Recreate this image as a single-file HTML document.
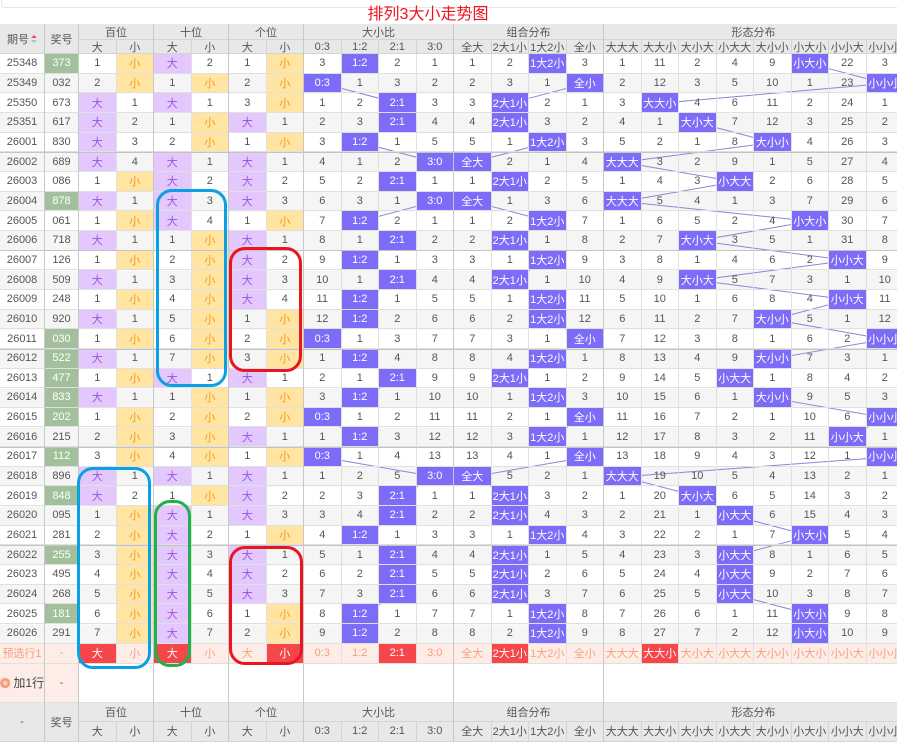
<!DOCTYPE html>
<html><head><meta charset="utf-8">
<style>
html,body{margin:0;padding:0;width:897px;height:742px;overflow:hidden;background:#fff}
body{position:relative;font-family:"Liberation Sans","Noto Sans CJK SC",sans-serif;}
.topbox{position:absolute;left:1px;top:-6px;width:905px;height:12px;border:1px solid #e6e6e6;border-radius:4px}
.title{position:absolute;left:0;width:856px;top:5px;text-align:center;color:#f0141e;font-size:16px;line-height:20px}
.stripes{position:absolute;left:0;top:54px;width:910px;height:590px;background:repeating-linear-gradient(to bottom,#fff 0,#fff 19.667px,#f5f5f5 19.667px,#f5f5f5 39.333px)}
svg.lines{position:absolute;left:0;top:0}
.grid{position:absolute;left:0;top:24px;display:grid;grid-template-columns:45px 34px repeat(22,37.5px);grid-template-rows:16px 14px repeat(30,19.667px) 20px 39px 19px 20px;font-size:11px;color:#555}
.grid i{font-style:normal;box-sizing:border-box;border-right:1px solid #e0e0e0;border-bottom:1px solid #e0e0e0;display:flex;align-items:center;justify-content:center;white-space:nowrap;overflow:hidden}
.grid i.hd{background:#e8e8e8;border-color:#d4d4d4;color:#555}
.r2{grid-row:span 2}.c2{grid-column:span 2}.c4{grid-column:span 4}.c8{grid-column:span 8}.c22{grid-column:span 22}
.grid i.b{background:#e3c8fd;color:#9a55dc}
.grid i.s{background:#ffe4a2;color:#f39a1a}
.grid i.h{background:#7c6cf8;color:#fff}
.grid i.g{background:#a3c09c;color:#fff}
.grid i.p{background:#feede6;color:#f3a07f}
.grid i.r{background:#f5474a;color:#fff}
.grid i.w{background:#fff}
.hl{position:absolute;left:0;width:910px;height:1px;background:#c4c4c4}
.vl{position:absolute;top:24px;width:1px;height:718px;background:#c8c8c8}
.box{position:absolute;border:3.5px solid;border-radius:16px;box-sizing:border-box}
.arr{display:inline-block;width:6px;margin-left:2px;vertical-align:middle}
</style></head><body>
<div class="topbox"></div>
<div class="title">排列3大小走势图</div>
<div class="stripes"></div>
<svg class="lines" width="897" height="742">
<g fill="none" stroke="#8a86d8" stroke-width="1">
<polyline points="360.3,63.8 322.8,83.5 397.8,103.2 397.8,122.8 360.3,142.5 435.3,162.2 397.8,181.8 435.3,201.5 360.3,221.2 397.8,240.8 360.3,260.5 397.8,280.2 360.3,299.8 360.3,319.5 322.8,339.2 360.3,358.8 397.8,378.5 360.3,398.2 322.8,417.8 360.3,437.5 322.8,457.2 435.3,476.8 397.8,496.5 397.8,516.2 360.3,535.8 397.8,555.5 397.8,575.2 397.8,594.8 360.3,614.5 360.3,634.2"/>
<polyline points="547.8,63.8 585.3,83.5 510.3,103.2 510.3,122.8 547.8,142.5 472.8,162.2 510.3,181.8 472.8,201.5 547.8,221.2 510.3,240.8 547.8,260.5 510.3,280.2 547.8,299.8 547.8,319.5 585.3,339.2 547.8,358.8 510.3,378.5 547.8,398.2 585.3,417.8 547.8,437.5 585.3,457.2 472.8,476.8 510.3,496.5 510.3,516.2 547.8,535.8 510.3,555.5 510.3,575.2 510.3,594.8 547.8,614.5 547.8,634.2"/>
<polyline points="810.3,63.8 885.3,83.5 660.3,103.2 697.8,122.8 772.8,142.5 622.8,162.2 735.3,181.8 622.8,201.5 810.3,221.2 697.8,240.8 847.8,260.5 697.8,280.2 847.8,299.8 772.8,319.5 885.3,339.2 772.8,358.8 735.3,378.5 772.8,398.2 885.3,417.8 847.8,437.5 885.3,457.2 622.8,476.8 697.8,496.5 735.3,516.2 810.3,535.8 735.3,555.5 735.3,575.2 735.3,594.8 810.3,614.5 810.3,634.2"/>
</g></svg>
<div class="grid">
<i class="hd r2">期号<svg class="arr" width="6" height="10" viewBox="0 0 6 10"><path d="M0 4L3 1L6 4Z" fill="#f0505a"/><path d="M0 6L3 9L6 6Z" fill="#bbb"/></svg></i><i class="hd r2">奖号</i><i class="hd c2">百位</i><i class="hd c2">十位</i><i class="hd c2">个位</i><i class="hd c4">大小比</i><i class="hd c4">组合分布</i><i class="hd c8">形态分布</i>
<i class="hd">大</i><i class="hd">小</i><i class="hd">大</i><i class="hd">小</i><i class="hd">大</i><i class="hd">小</i><i class="hd">0:3</i><i class="hd">1:2</i><i class="hd">2:1</i><i class="hd">3:0</i><i class="hd">全大</i><i class="hd">2大1小</i><i class="hd">1大2小</i><i class="hd">全小</i><i class="hd">大大大</i><i class="hd">大大小</i><i class="hd">大小大</i><i class="hd">小大大</i><i class="hd">大小小</i><i class="hd">小大小</i><i class="hd">小小大</i><i class="hd">小小小</i>

<i>25348</i><i class="g">373</i><i>1</i><i class="s">小</i><i class="b">大</i><i>2</i><i>1</i><i class="s">小</i><i>3</i><i class="h">1:2</i><i>2</i><i>1</i><i>1</i><i>2</i><i class="h">1大2小</i><i>3</i><i>1</i><i>11</i><i>2</i><i>4</i><i>9</i><i class="h">小大小</i><i>22</i><i>3</i>
<i>25349</i><i>032</i><i>2</i><i class="s">小</i><i>1</i><i class="s">小</i><i>2</i><i class="s">小</i><i class="h">0:3</i><i>1</i><i>3</i><i>2</i><i>2</i><i>3</i><i>1</i><i class="h">全小</i><i>2</i><i>12</i><i>3</i><i>5</i><i>10</i><i>1</i><i>23</i><i class="h">小小小</i>
<i>25350</i><i>673</i><i class="b">大</i><i>1</i><i class="b">大</i><i>1</i><i>3</i><i class="s">小</i><i>1</i><i>2</i><i class="h">2:1</i><i>3</i><i>3</i><i class="h">2大1小</i><i>2</i><i>1</i><i>3</i><i class="h">大大小</i><i>4</i><i>6</i><i>11</i><i>2</i><i>24</i><i>1</i>
<i>25351</i><i>617</i><i class="b">大</i><i>2</i><i>1</i><i class="s">小</i><i class="b">大</i><i>1</i><i>2</i><i>3</i><i class="h">2:1</i><i>4</i><i>4</i><i class="h">2大1小</i><i>3</i><i>2</i><i>4</i><i>1</i><i class="h">大小大</i><i>7</i><i>12</i><i>3</i><i>25</i><i>2</i>
<i>26001</i><i>830</i><i class="b">大</i><i>3</i><i>2</i><i class="s">小</i><i>1</i><i class="s">小</i><i>3</i><i class="h">1:2</i><i>1</i><i>5</i><i>5</i><i>1</i><i class="h">1大2小</i><i>3</i><i>5</i><i>2</i><i>1</i><i>8</i><i class="h">大小小</i><i>4</i><i>26</i><i>3</i>
<i>26002</i><i>689</i><i class="b">大</i><i>4</i><i class="b">大</i><i>1</i><i class="b">大</i><i>1</i><i>4</i><i>1</i><i>2</i><i class="h">3:0</i><i class="h">全大</i><i>2</i><i>1</i><i>4</i><i class="h">大大大</i><i>3</i><i>2</i><i>9</i><i>1</i><i>5</i><i>27</i><i>4</i>
<i>26003</i><i>086</i><i>1</i><i class="s">小</i><i class="b">大</i><i>2</i><i class="b">大</i><i>2</i><i>5</i><i>2</i><i class="h">2:1</i><i>1</i><i>1</i><i class="h">2大1小</i><i>2</i><i>5</i><i>1</i><i>4</i><i>3</i><i class="h">小大大</i><i>2</i><i>6</i><i>28</i><i>5</i>
<i>26004</i><i class="g">878</i><i class="b">大</i><i>1</i><i class="b">大</i><i>3</i><i class="b">大</i><i>3</i><i>6</i><i>3</i><i>1</i><i class="h">3:0</i><i class="h">全大</i><i>1</i><i>3</i><i>6</i><i class="h">大大大</i><i>5</i><i>4</i><i>1</i><i>3</i><i>7</i><i>29</i><i>6</i>
<i>26005</i><i>061</i><i>1</i><i class="s">小</i><i class="b">大</i><i>4</i><i>1</i><i class="s">小</i><i>7</i><i class="h">1:2</i><i>2</i><i>1</i><i>1</i><i>2</i><i class="h">1大2小</i><i>7</i><i>1</i><i>6</i><i>5</i><i>2</i><i>4</i><i class="h">小大小</i><i>30</i><i>7</i>
<i>26006</i><i>718</i><i class="b">大</i><i>1</i><i>1</i><i class="s">小</i><i class="b">大</i><i>1</i><i>8</i><i>1</i><i class="h">2:1</i><i>2</i><i>2</i><i class="h">2大1小</i><i>1</i><i>8</i><i>2</i><i>7</i><i class="h">大小大</i><i>3</i><i>5</i><i>1</i><i>31</i><i>8</i>
<i>26007</i><i>126</i><i>1</i><i class="s">小</i><i>2</i><i class="s">小</i><i class="b">大</i><i>2</i><i>9</i><i class="h">1:2</i><i>1</i><i>3</i><i>3</i><i>1</i><i class="h">1大2小</i><i>9</i><i>3</i><i>8</i><i>1</i><i>4</i><i>6</i><i>2</i><i class="h">小小大</i><i>9</i>
<i>26008</i><i>509</i><i class="b">大</i><i>1</i><i>3</i><i class="s">小</i><i class="b">大</i><i>3</i><i>10</i><i>1</i><i class="h">2:1</i><i>4</i><i>4</i><i class="h">2大1小</i><i>1</i><i>10</i><i>4</i><i>9</i><i class="h">大小大</i><i>5</i><i>7</i><i>3</i><i>1</i><i>10</i>
<i>26009</i><i>248</i><i>1</i><i class="s">小</i><i>4</i><i class="s">小</i><i class="b">大</i><i>4</i><i>11</i><i class="h">1:2</i><i>1</i><i>5</i><i>5</i><i>1</i><i class="h">1大2小</i><i>11</i><i>5</i><i>10</i><i>1</i><i>6</i><i>8</i><i>4</i><i class="h">小小大</i><i>11</i>
<i>26010</i><i>920</i><i class="b">大</i><i>1</i><i>5</i><i class="s">小</i><i>1</i><i class="s">小</i><i>12</i><i class="h">1:2</i><i>2</i><i>6</i><i>6</i><i>2</i><i class="h">1大2小</i><i>12</i><i>6</i><i>11</i><i>2</i><i>7</i><i class="h">大小小</i><i>5</i><i>1</i><i>12</i>
<i>26011</i><i class="g">030</i><i>1</i><i class="s">小</i><i>6</i><i class="s">小</i><i>2</i><i class="s">小</i><i class="h">0:3</i><i>1</i><i>3</i><i>7</i><i>7</i><i>3</i><i>1</i><i class="h">全小</i><i>7</i><i>12</i><i>3</i><i>8</i><i>1</i><i>6</i><i>2</i><i class="h">小小小</i>
<i>26012</i><i class="g">522</i><i class="b">大</i><i>1</i><i>7</i><i class="s">小</i><i>3</i><i class="s">小</i><i>1</i><i class="h">1:2</i><i>4</i><i>8</i><i>8</i><i>4</i><i class="h">1大2小</i><i>1</i><i>8</i><i>13</i><i>4</i><i>9</i><i class="h">大小小</i><i>7</i><i>3</i><i>1</i>
<i>26013</i><i class="g">477</i><i>1</i><i class="s">小</i><i class="b">大</i><i>1</i><i class="b">大</i><i>1</i><i>2</i><i>1</i><i class="h">2:1</i><i>9</i><i>9</i><i class="h">2大1小</i><i>1</i><i>2</i><i>9</i><i>14</i><i>5</i><i class="h">小大大</i><i>1</i><i>8</i><i>4</i><i>2</i>
<i>26014</i><i class="g">833</i><i class="b">大</i><i>1</i><i>1</i><i class="s">小</i><i>1</i><i class="s">小</i><i>3</i><i class="h">1:2</i><i>1</i><i>10</i><i>10</i><i>1</i><i class="h">1大2小</i><i>3</i><i>10</i><i>15</i><i>6</i><i>1</i><i class="h">大小小</i><i>9</i><i>5</i><i>3</i>
<i>26015</i><i class="g">202</i><i>1</i><i class="s">小</i><i>2</i><i class="s">小</i><i>2</i><i class="s">小</i><i class="h">0:3</i><i>1</i><i>2</i><i>11</i><i>11</i><i>2</i><i>1</i><i class="h">全小</i><i>11</i><i>16</i><i>7</i><i>2</i><i>1</i><i>10</i><i>6</i><i class="h">小小小</i>
<i>26016</i><i>215</i><i>2</i><i class="s">小</i><i>3</i><i class="s">小</i><i class="b">大</i><i>1</i><i>1</i><i class="h">1:2</i><i>3</i><i>12</i><i>12</i><i>3</i><i class="h">1大2小</i><i>1</i><i>12</i><i>17</i><i>8</i><i>3</i><i>2</i><i>11</i><i class="h">小小大</i><i>1</i>
<i>26017</i><i class="g">112</i><i>3</i><i class="s">小</i><i>4</i><i class="s">小</i><i>1</i><i class="s">小</i><i class="h">0:3</i><i>1</i><i>4</i><i>13</i><i>13</i><i>4</i><i>1</i><i class="h">全小</i><i>13</i><i>18</i><i>9</i><i>4</i><i>3</i><i>12</i><i>1</i><i class="h">小小小</i>
<i>26018</i><i>896</i><i class="b">大</i><i>1</i><i class="b">大</i><i>1</i><i class="b">大</i><i>1</i><i>1</i><i>2</i><i>5</i><i class="h">3:0</i><i class="h">全大</i><i>5</i><i>2</i><i>1</i><i class="h">大大大</i><i>19</i><i>10</i><i>5</i><i>4</i><i>13</i><i>2</i><i>1</i>
<i>26019</i><i class="g">848</i><i class="b">大</i><i>2</i><i>1</i><i class="s">小</i><i class="b">大</i><i>2</i><i>2</i><i>3</i><i class="h">2:1</i><i>1</i><i>1</i><i class="h">2大1小</i><i>3</i><i>2</i><i>1</i><i>20</i><i class="h">大小大</i><i>6</i><i>5</i><i>14</i><i>3</i><i>2</i>
<i>26020</i><i>095</i><i>1</i><i class="s">小</i><i class="b">大</i><i>1</i><i class="b">大</i><i>3</i><i>3</i><i>4</i><i class="h">2:1</i><i>2</i><i>2</i><i class="h">2大1小</i><i>4</i><i>3</i><i>2</i><i>21</i><i>1</i><i class="h">小大大</i><i>6</i><i>15</i><i>4</i><i>3</i>
<i>26021</i><i>281</i><i>2</i><i class="s">小</i><i class="b">大</i><i>2</i><i>1</i><i class="s">小</i><i>4</i><i class="h">1:2</i><i>1</i><i>3</i><i>3</i><i>1</i><i class="h">1大2小</i><i>4</i><i>3</i><i>22</i><i>2</i><i>1</i><i>7</i><i class="h">小大小</i><i>5</i><i>4</i>
<i>26022</i><i class="g">255</i><i>3</i><i class="s">小</i><i class="b">大</i><i>3</i><i class="b">大</i><i>1</i><i>5</i><i>1</i><i class="h">2:1</i><i>4</i><i>4</i><i class="h">2大1小</i><i>1</i><i>5</i><i>4</i><i>23</i><i>3</i><i class="h">小大大</i><i>8</i><i>1</i><i>6</i><i>5</i>
<i>26023</i><i>495</i><i>4</i><i class="s">小</i><i class="b">大</i><i>4</i><i class="b">大</i><i>2</i><i>6</i><i>2</i><i class="h">2:1</i><i>5</i><i>5</i><i class="h">2大1小</i><i>2</i><i>6</i><i>5</i><i>24</i><i>4</i><i class="h">小大大</i><i>9</i><i>2</i><i>7</i><i>6</i>
<i>26024</i><i>268</i><i>5</i><i class="s">小</i><i class="b">大</i><i>5</i><i class="b">大</i><i>3</i><i>7</i><i>3</i><i class="h">2:1</i><i>6</i><i>6</i><i class="h">2大1小</i><i>3</i><i>7</i><i>6</i><i>25</i><i>5</i><i class="h">小大大</i><i>10</i><i>3</i><i>8</i><i>7</i>
<i>26025</i><i class="g">181</i><i>6</i><i class="s">小</i><i class="b">大</i><i>6</i><i>1</i><i class="s">小</i><i>8</i><i class="h">1:2</i><i>1</i><i>7</i><i>7</i><i>1</i><i class="h">1大2小</i><i>8</i><i>7</i><i>26</i><i>6</i><i>1</i><i>11</i><i class="h">小大小</i><i>9</i><i>8</i>
<i>26026</i><i>291</i><i>7</i><i class="s">小</i><i class="b">大</i><i>7</i><i>2</i><i class="s">小</i><i>9</i><i class="h">1:2</i><i>2</i><i>8</i><i>8</i><i>2</i><i class="h">1大2小</i><i>9</i><i>8</i><i>27</i><i>7</i><i>2</i><i>12</i><i class="h">小大小</i><i>10</i><i>9</i>

<i class="p">预选行1</i><i class="p">-</i><i class="r">大</i><i class="p">小</i><i class="r">大</i><i class="p">小</i><i class="p">大</i><i class="r">小</i><i class="p">0:3</i><i class="p">1:2</i><i class="r">2:1</i><i class="p">3:0</i><i class="p">全大</i><i class="r">2大1小</i><i class="p">1大2小</i><i class="p">全小</i><i class="p">大大大</i><i class="r">大大小</i><i class="p">大小大</i><i class="p">小大大</i><i class="p">大小小</i><i class="p">小大小</i><i class="p">小小大</i><i class="p">小小小</i>
<i class="p" style="color:#444;font-size:12px"><svg width="12" height="12" viewBox="0 0 12 12" style="margin-right:3px"><circle cx="6" cy="6" r="6" fill="#f4a07c"/><circle cx="6" cy="6" r="2.5" fill="#fbd3c0"/></svg>加1行</i><i class="p" style="color:#555">-</i><i class="w c22"></i>
<i class="hd r2">-</i><i class="hd r2">奖号</i><i class="hd c2">百位</i><i class="hd c2">十位</i><i class="hd c2">个位</i><i class="hd c4">大小比</i><i class="hd c4">组合分布</i><i class="hd c8">形态分布</i>
<i class="hd">大</i><i class="hd">小</i><i class="hd">大</i><i class="hd">小</i><i class="hd">大</i><i class="hd">小</i><i class="hd">0:3</i><i class="hd">1:2</i><i class="hd">2:1</i><i class="hd">3:0</i><i class="hd">全大</i><i class="hd">2大1小</i><i class="hd">1大2小</i><i class="hd">全小</i><i class="hd">大大大</i><i class="hd">大大小</i><i class="hd">大小大</i><i class="hd">小大大</i><i class="hd">大小小</i><i class="hd">小大小</i><i class="hd">小小大</i><i class="hd">小小小</i>
</div>
<div class="hl" style="top:152px"></div>
<div class="hl" style="top:250px"></div>
<div class="hl" style="top:349px"></div>
<div class="hl" style="top:447px"></div>
<div class="hl" style="top:545px"></div>
<div class="vl" style="left:44px"></div>
<div class="vl" style="left:78px"></div>
<div class="vl" style="left:153px"></div>
<div class="vl" style="left:228px"></div>
<div class="vl" style="left:303px"></div>
<div class="vl" style="left:453px"></div>
<div class="vl" style="left:603px"></div>
<div class="box" style="left:156px;top:189px;width:71px;height:198px;border-color:#0aa0e6"></div>
<div class="box" style="left:229px;top:247px;width:73px;height:125px;border-color:#ea1520"></div>
<div class="box" style="left:77px;top:467px;width:74px;height:202px;border-color:#0aa0e6"></div>
<div class="box" style="left:154px;top:500px;width:37px;height:167px;border-color:#22b04a"></div>
<div class="box" style="left:229px;top:546px;width:74px;height:119px;border-color:#ea1520"></div>
</body></html>
